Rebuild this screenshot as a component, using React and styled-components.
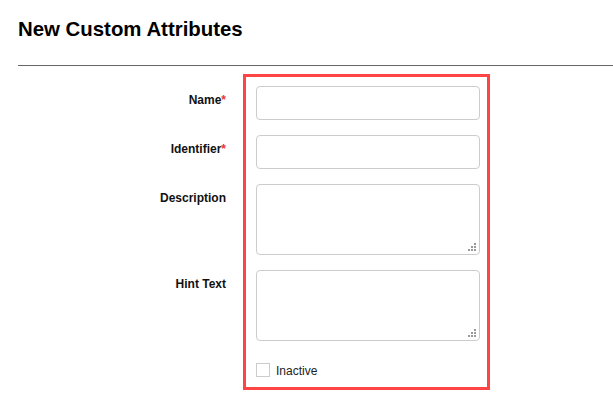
import React from 'react'
import styled, { createGlobalStyle } from 'styled-components'

const GlobalStyle = createGlobalStyle`
  body {
    margin: 0;
    background: #fff;
    font-family: 'Liberation Sans', Arial, sans-serif;
    color: #111;
  }
`

const grip = encodeURIComponent(
  '<svg xmlns="http://www.w3.org/2000/svg" width="10" height="10"><g fill="#999"><rect x="7" y="1" width="2" height="2"/><rect x="4" y="4" width="2" height="2"/><rect x="7" y="4" width="2" height="2"/><rect x="1" y="7" width="2" height="2"/><rect x="4" y="7" width="2" height="2"/><rect x="7" y="7" width="2" height="2"/></g></svg>'
)

const Page = styled.div`
  padding: 18px 0 0 18px;
`

const Title = styled.h1`
  margin: 0;
  font-size: 20.4px;
  font-weight: 700;
  line-height: 22px;
  color: #000;
`

const Rule = styled.hr`
  margin: 25px 0 0;
  border: 0;
  border-top: 1px solid #666;
`

const Form = styled.div`
  display: flex;
  align-items: flex-start;
  gap: 17px;
  margin-top: 8px;
`

const Labels = styled.div`
  width: 208px;
  display: flex;
  flex-direction: column;
  gap: 15px;
  padding-top: 12px;
`

const Label = styled.div`
  height: ${(p) => p.$h}px;
  text-align: right;
  font-size: 12px;
  font-weight: 700;
  line-height: 14px;
  padding-top: 7px;
  box-sizing: border-box;
`

const Req = styled.span`
  color: #e33;
`

const Box = styled.div`
  box-sizing: border-box;
  width: 247px;
  border: 3px solid #f44;
  padding: 9px 7px 8px 10px;
  display: flex;
  flex-direction: column;
  gap: 15px;
`

const Input = styled.input`
  box-sizing: border-box;
  width: 224px;
  height: 34px;
  margin: 0;
  border: 1px solid #ccc;
  border-radius: 4px;
  outline: none;
`

const Area = styled.textarea`
  box-sizing: border-box;
  width: 224px;
  height: 71px;
  margin: 0;
  border: 1px solid #ccc;
  border-radius: 4px;
  outline: none;
  resize: none;
  display: block;
  background: #fff url("data:image/svg+xml,${grip}") no-repeat right 2px bottom 2px;
`

const CheckRow = styled.label`
  display: flex;
  align-items: center;
  gap: 6px;
  margin-top: 5px;
  font-size: 12px;
  line-height: 16px;
  color: #222;
`

const Check = styled.input`
  appearance: none;
  margin: 0;
  width: 14px;
  height: 14px;
  border: 1px solid #ccc;
  background: #fff;
`

const CheckText = styled.span`
  padding-top: 2px;
`

export default function App() {
  return (
    <Page>
      <GlobalStyle />
      <Title>New Custom Attributes</Title>
      <Rule />
      <Form>
        <Labels>
          <Label $h={34}>Name<Req>*</Req></Label>
          <Label $h={34}>Identifier<Req>*</Req></Label>
          <Label $h={71}>Description</Label>
          <Label $h={71}>Hint Text</Label>
        </Labels>
        <Box>
          <Input />
          <Input />
          <Area />
          <Area />
          <CheckRow>
            <Check type="checkbox" />
            <CheckText>Inactive</CheckText>
          </CheckRow>
        </Box>
      </Form>
    </Page>
  )
}
